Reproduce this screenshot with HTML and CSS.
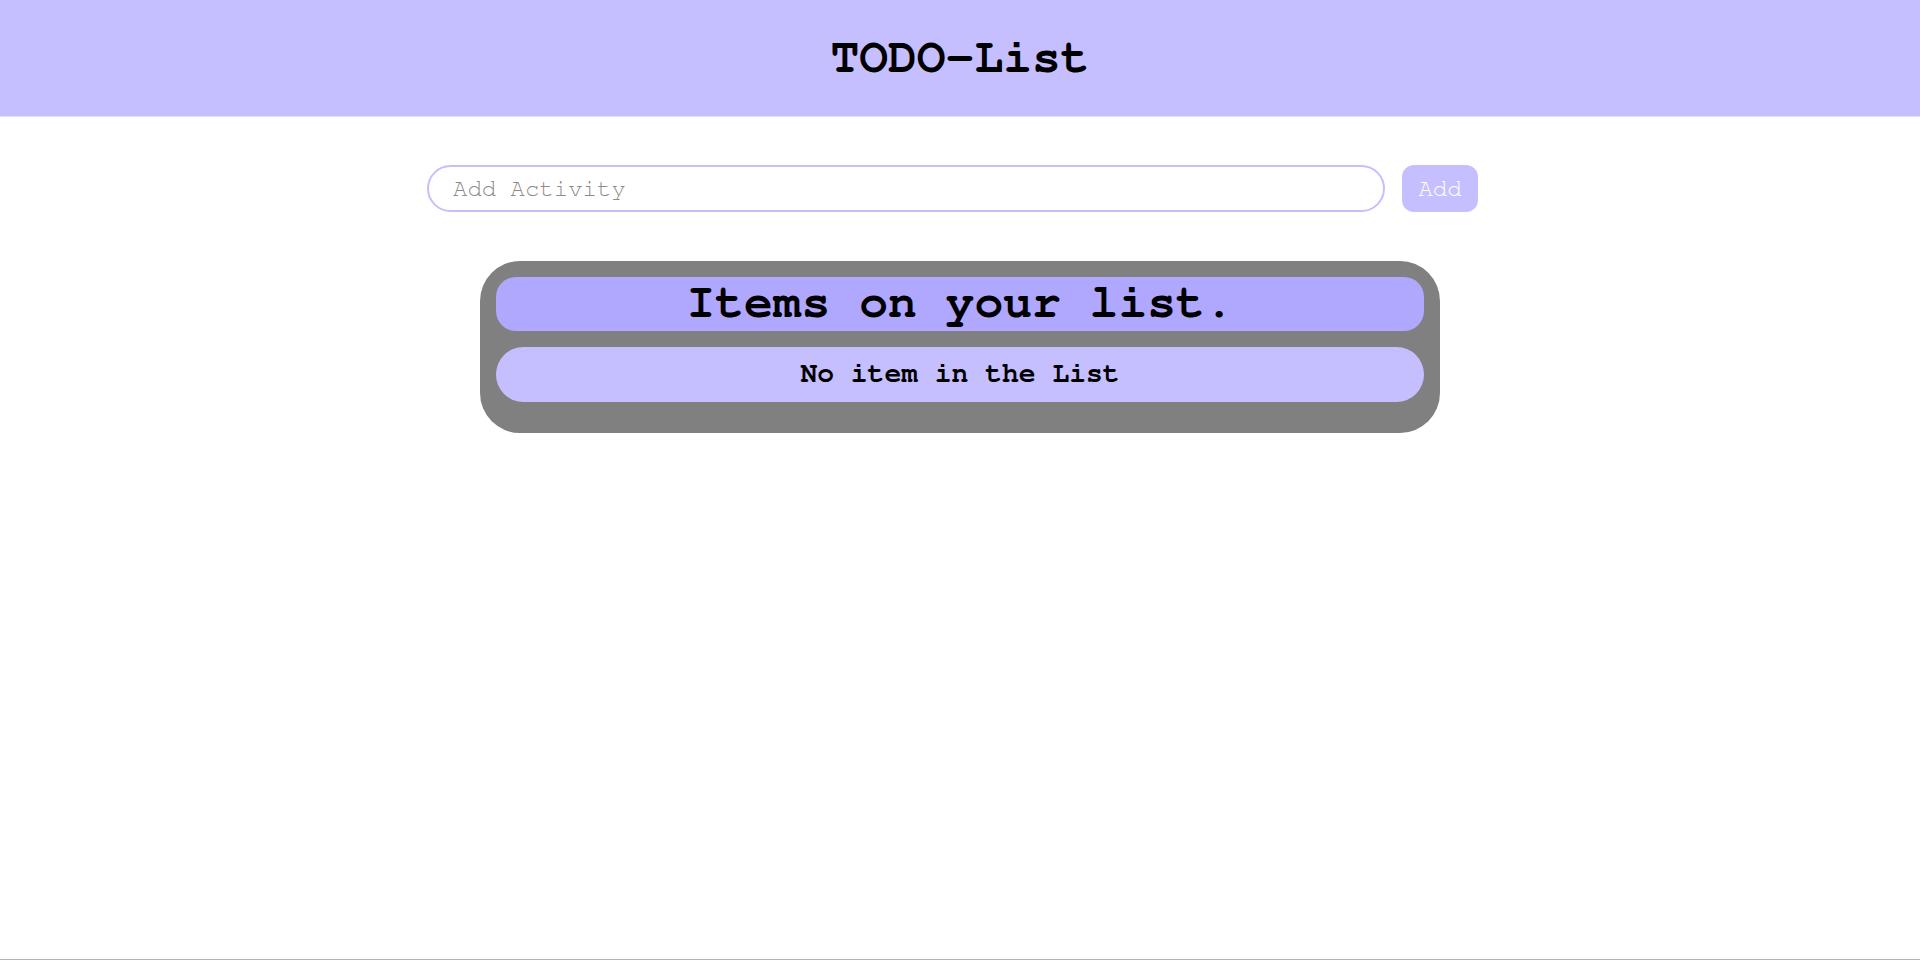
FILE: index.html
```html
<!DOCTYPE html>
<html lang="en">
<head>
<meta charset="utf-8">
<title>TODO-List</title>
<link rel="stylesheet" href="styles.css">
</head>
<body>
<div class="page">
  <header class="topbar">
    <h1 class="title">TODO-List</h1>
  </header>
  <form class="add-form">
    <input class="add-input" type="text" placeholder="Add Activity">
    <button class="add-btn" type="button">Add</button>
  </form>
  <section class="card">
    <h2 class="card-head">Items on your list.</h2>
    <div class="item">No item in the List</div>
  </section>
  <footer class="bottom-line"></footer>
</div>
</body>
</html>
```

FILE: styles.css
```css
html, body {
  margin: 0;
  padding: 0;
  background: #ffffff;
}

body {
  font-family: "FreeMono", "Liberation Mono", monospace;
  color: #000;
}

.page {
  min-height: 960px;
  display: flex;
  flex-direction: column;
}

.topbar {
  height: 116px;
  background: #c6bfff;
  display: flex;
  align-items: center;
  justify-content: center;
  box-shadow: 0 1px 0 #e4e0ff;
}

.title {
  margin: 0;
  font-size: 48px;
  font-weight: bold;
  line-height: 54px;
}

.add-form {
  display: flex;
  justify-content: center;
  gap: 17px;
  margin: 49px 0 0 0;
  padding-right: 15px;
}

.add-input {
  box-sizing: border-box;
  width: 958px;
  height: 47px;
  border: 2px solid #c6bfff;
  border-radius: 24px;
  padding: 0 24px;
  font-family: inherit;
  font-size: 24px;
  color: #000;
  outline: none;
  background: #fff;
}

.add-input::placeholder {
  color: #8f8a86;
}

.add-btn {
  box-sizing: border-box;
  width: 76px;
  height: 47px;
  border: none;
  border-radius: 12px;
  background: #c6bfff;
  color: #ffffff;
  font-family: inherit;
  font-size: 24px;
  padding: 0;
}

.card {
  box-sizing: border-box;
  width: 960px;
  margin: 49px auto 0 auto;
  padding: 16px 16px 31px 16px;
  background: #808080;
  border-radius: 40px;
  display: flex;
  flex-direction: column;
  gap: 16px;
}

.card-head {
  margin: 0;
  background: #b0a8ff;
  border-radius: 20px;
  text-align: center;
  font-size: 48px;
  font-weight: bold;
  line-height: 53px;
  padding-bottom: 1px;
}

.item {
  background: #c6bfff;
  border-radius: 28px;
  text-align: center;
  font-size: 28px;
  font-weight: bold;
  line-height: 33px;
  padding: 11px 0;
}

.bottom-line {
  margin-top: auto;
  height: 1px;
  background: #b3b3b3;
}
```
